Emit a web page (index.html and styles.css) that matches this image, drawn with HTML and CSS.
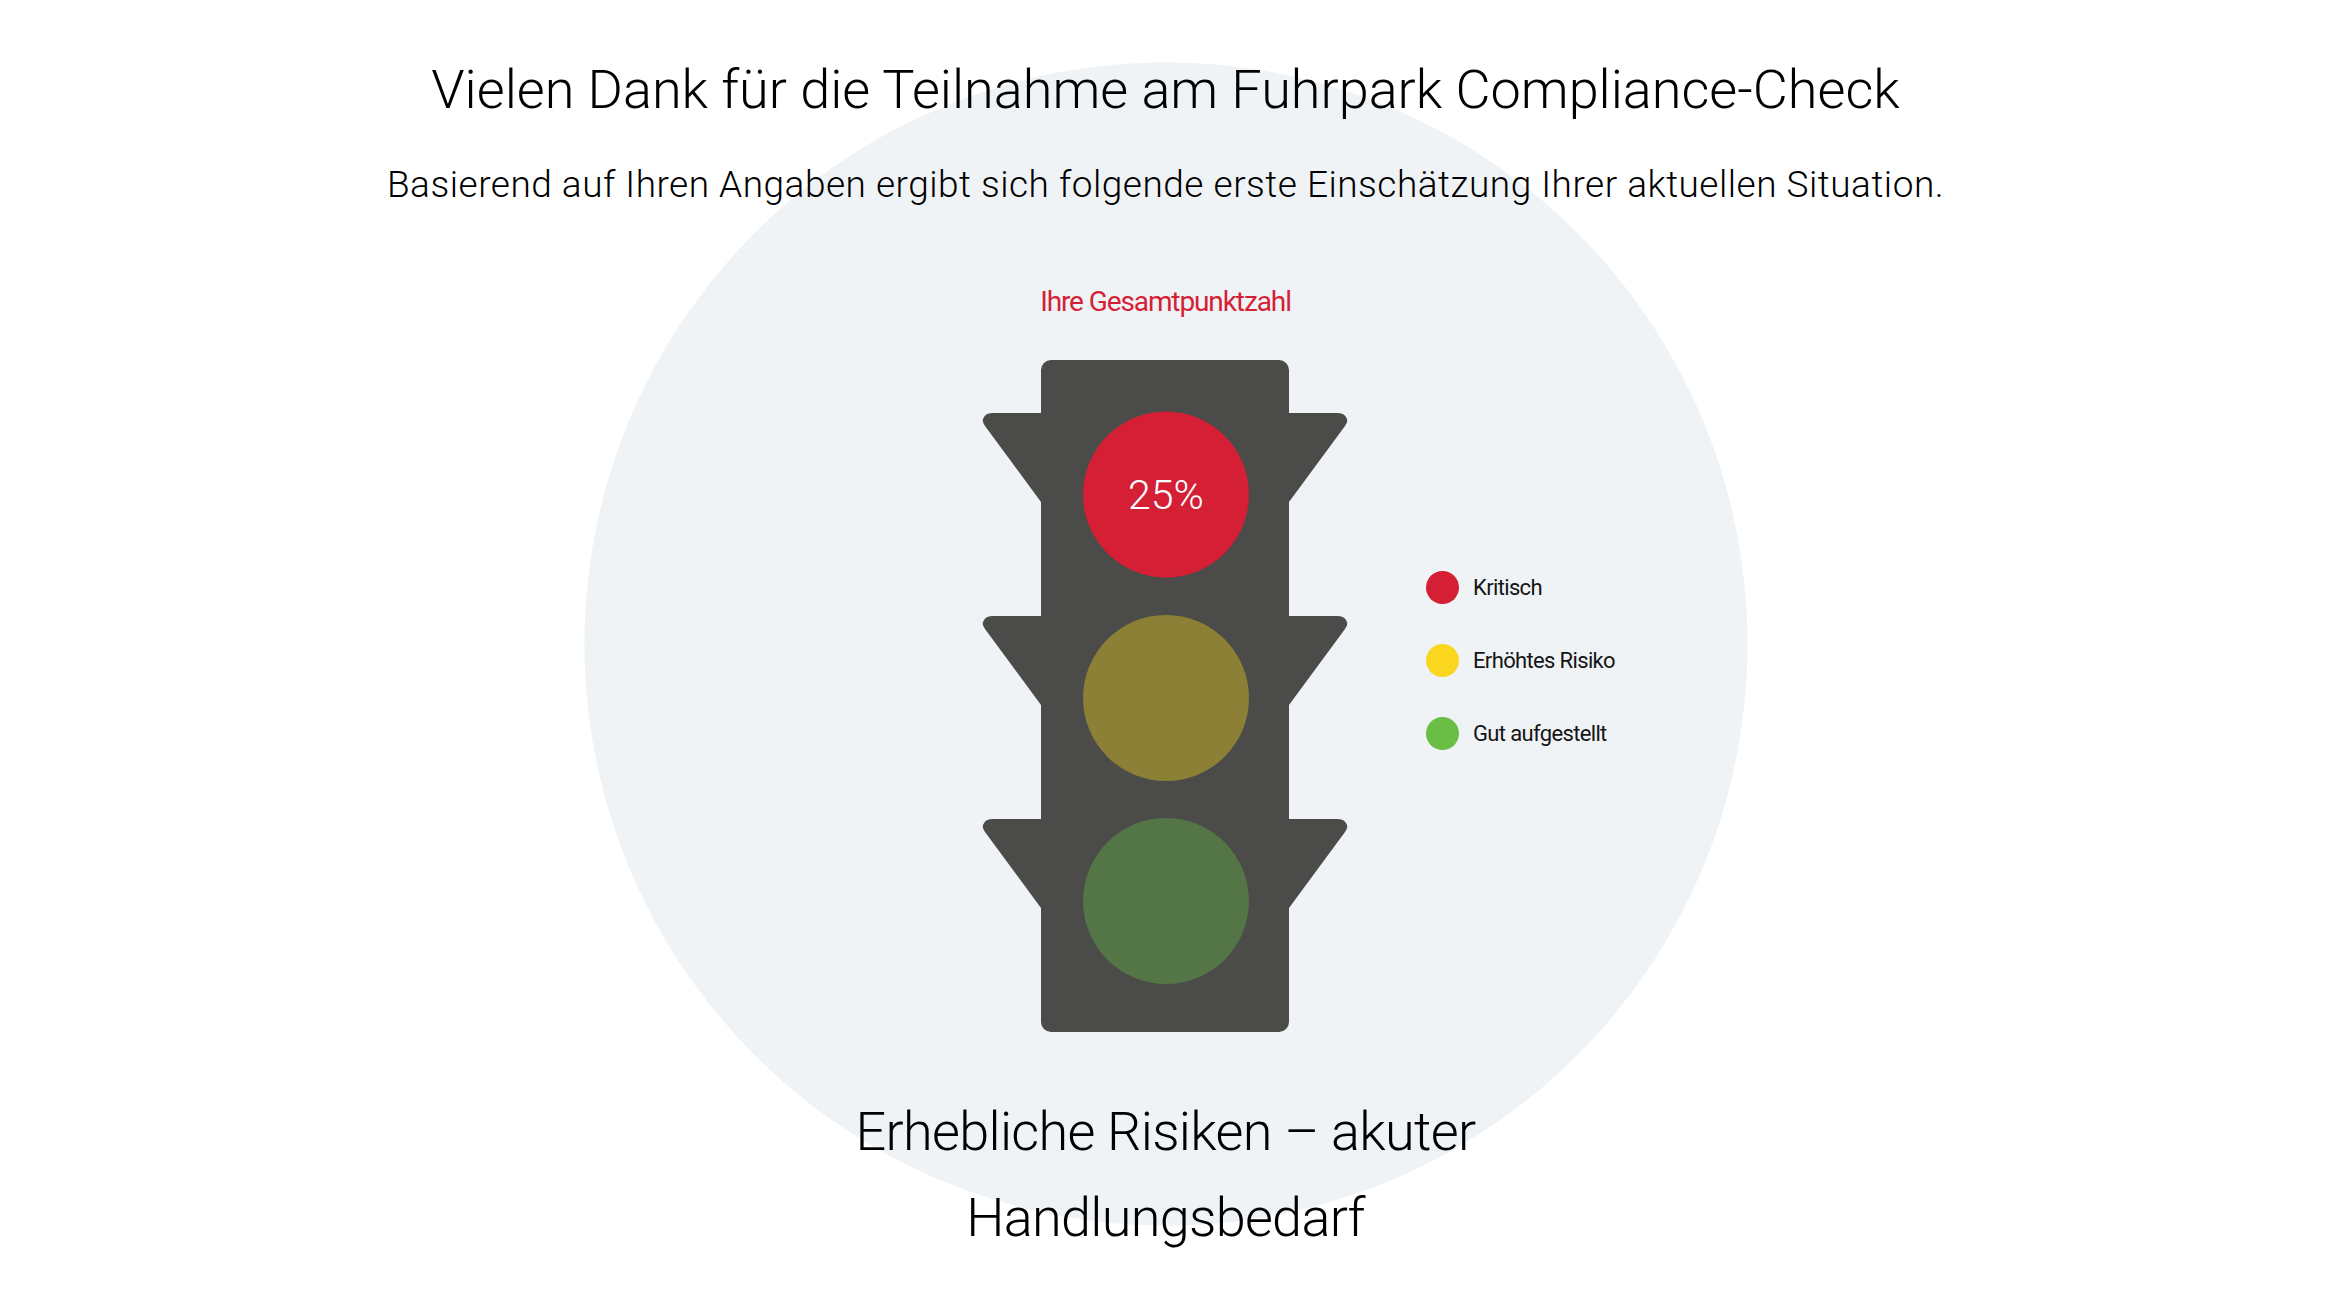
FILE: index.html
```html
<!DOCTYPE html>
<html lang="de">
<head>
<meta charset="utf-8">
<title>Fuhrpark Compliance-Check – Ergebnis</title>
<link rel="stylesheet" href="styles.css">
</head>
<body>
<main class="result">
  <h1 class="result-title">Vielen Dank für die Teilnahme am Fuhrpark Compliance-Check</h1>
  <p class="result-intro">Basierend auf Ihren Angaben ergibt sich folgende erste Einschätzung Ihrer aktuellen Situation.</p>
  <div class="score-label">Ihre Gesamtpunktzahl</div>
  <div class="stage">
    <div class="stage-spacer"></div>
    <svg class="traffic-light" width="366" height="672" viewBox="0 0 366 672" aria-label="Ampel">
      <rect x="59" y="0" width="248" height="672" rx="10" fill="#4b4b49"/>
      <path fill="#4b4b49" d="M59,142 L3,66 Q0,62 1,59 Q3,53 10,53 L356,53 Q363,53 365,59 Q366,62 363,66 L307,142 Z"/>
      <path fill="#4b4b49" d="M59,345 L3,269 Q0,265 1,262 Q3,256 10,256 L356,256 Q363,256 365,262 Q366,265 363,269 L307,345 Z"/>
      <path fill="#4b4b49" d="M59,548 L3,472 Q0,468 1,465 Q3,459 10,459 L356,459 Q363,459 365,465 Q366,468 363,472 L307,548 Z"/>
      <circle cx="184" cy="134.5" r="83" fill="#d41f35"/>
      <circle cx="184" cy="338" r="83" fill="#8b8036"/>
      <circle cx="184" cy="541" r="83" fill="#547545"/>
      <text class="score-value" x="184" y="149" text-anchor="middle">25%</text>
    </svg>
    <ul class="legend">
      <li class="legend-item"><span class="legend-dot dot-red"></span><span class="legend-text">Kritisch</span></li>
      <li class="legend-item"><span class="legend-dot dot-yellow"></span><span class="legend-text">Erhöhtes Risiko</span></li>
      <li class="legend-item"><span class="legend-dot dot-green"></span><span class="legend-text">Gut aufgestellt</span></li>
    </ul>
  </div>
  <h2 class="verdict">Erhebliche Risiken – akuter Handlungsbedarf</h2>
</main>
</body>
</html>
```
FILE: styles.css
```css
html, body {
  margin: 0;
  padding: 0;
}

body {
  min-height: 100vh;
  background-color: #ffffff;
  background-image: radial-gradient(circle 582px at 1166px 644px, #f0f3f6 99.85%, rgba(240, 243, 246, 0) 100%);
  background-repeat: no-repeat;
  font-family: Roboto, "Noto Sans", sans-serif;
  font-weight: 300;
  color: #000000;
}

.result {
  display: flex;
  flex-direction: column;
  align-items: center;
  padding: 58px 3px 0 0;
  text-align: center;
}

.result-title {
  margin: 0;
  font-size: 54px;
  line-height: 64px;
  font-weight: 300;
  white-space: nowrap;
}

.result-intro {
  margin: 41px 0 0;
  font-size: 37px;
  line-height: 44px;
  letter-spacing: 0.5px;
  white-space: nowrap;
}

.score-label {
  margin-top: 78px;
  font-size: 28px;
  line-height: 34px;
  letter-spacing: -1.1px;
  color: #d41f35;
  font-weight: 400;
}

.stage {
  align-self: stretch;
  display: grid;
  grid-template-columns: 1fr 366px 1fr;
  margin-top: 41px;
  padding-right: 1px;
}

.traffic-light {
  display: block;
}

.score-value {
  font-family: Roboto, sans-serif;
  font-size: 41px;
  font-weight: 300;
  fill: #ffffff;
}

.legend {
  list-style: none;
  margin: 211px 0 0 78px;
  padding: 0;
  display: flex;
  flex-direction: column;
  align-items: flex-start;
  gap: 40px;
  align-self: start;
  justify-self: start;
}

.legend-item {
  display: flex;
  align-items: center;
  gap: 14px;
  height: 33px;
  font-size: 22px;
  line-height: 28px;
  font-weight: 400;
  letter-spacing: -0.65px;
  color: #151515;
}

.legend-dot {
  width: 33px;
  height: 33px;
  border-radius: 50%;
  flex: none;
}

.dot-red { background: #d41f35; }
.dot-yellow { background: #fbd61f; }
.dot-green { background: #6abd45; }

.verdict {
  margin: 57px 0 0;
  max-width: 720px;
  font-size: 54px;
  line-height: 86px;
  letter-spacing: -0.7px;
  font-weight: 300;
}
```
